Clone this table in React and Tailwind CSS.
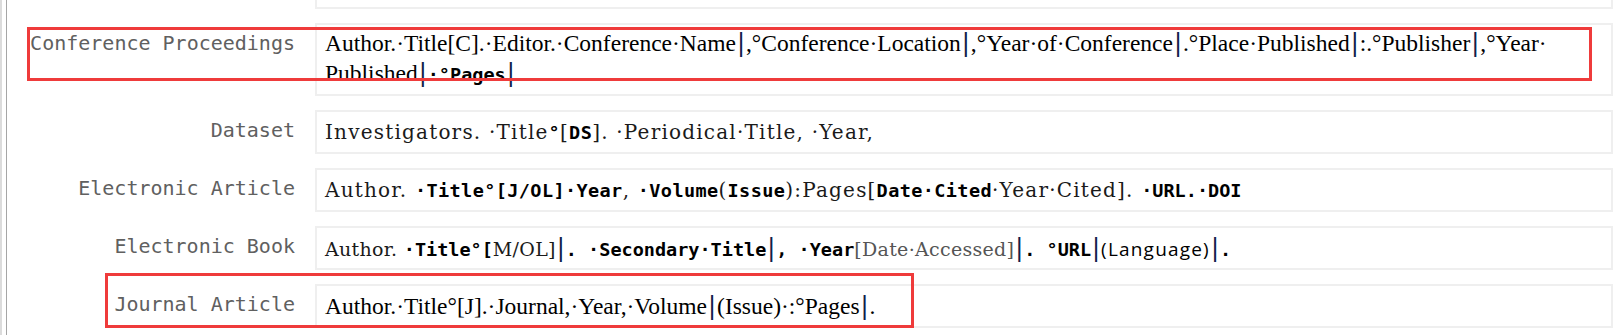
import React from "react";

const cls = {
  s: "font-['DejaVu_Serif'] text-[19px] tracking-[0.3px] text-[#1a1a1a]",
  w: "font-['DejaVu_Serif'] text-[20px] tracking-[1.2px] text-[#1a1a1a]",
  g: "font-['DejaVu_Serif'] text-[19px] tracking-[0.3px] text-[#555555]",
  t: "font-['Liberation_Serif'] text-[23.5px] text-black",
  b: "font-['DejaVu_Sans_Mono'] font-bold text-[18.5px] text-black",
  x: "font-['DejaVu_Sans_Mono'] font-bold text-[18.5px] tracking-[0.4px] text-black",
  m: "font-['DejaVu_Sans_Mono'] font-semibold text-[18.5px] text-black",
  o: "font-['Open_Sans'] text-[19px] tracking-[1.2px] text-black",
  p: "inline-block w-[10px] text-center font-['DejaVu_Sans'] text-[24px] text-[#10204a]",
};

const rows = [
  {
    label: "Dataset",
    parts: [
      ["w", "Investigators. ·Title"],
      ["x", "°"],
      ["w", "["],
      ["x", "DS"],
      ["w", "]. ·Periodical·Title, ·Year,"],
    ],
  },
  {
    label: "Electronic Article",
    parts: [
      ["w", "Author. "],
      ["x", "·Title°[J/OL]·Year"],
      ["w", ", "],
      ["x", "·Volume"],
      ["w", "("],
      ["x", "Issue"],
      ["w", "):Pages["],
      ["x", "Date·Cited"],
      ["w", "·Year·Cited]. "],
      ["m", "·URL.·DOI"],
    ],
  },
  {
    label: "Electronic Book",
    parts: [
      ["s", "Author. "],
      ["b", "·Title°["],
      ["s", "M/OL]"],
      ["p", "|"],
      ["b", ". ·Secondary·Title"],
      ["p", "|"],
      ["b", ", ·Year"],
      ["g", "[Date·Accessed]"],
      ["p", "|"],
      ["b", ". °URL"],
      ["p", "|"],
      ["o", "(Language)"],
      ["p", "|"],
      ["b", "."],
    ],
  },
  {
    label: "Journal Article",
    parts: [
      ["t", "Author.·Title°[J].·Journal,·Year,·Volume"],
      ["p", "|"],
      ["t", "(Issue)·:°Pages"],
      ["p", "|"],
      ["t", "."],
    ],
  },
];

function Parts({ parts }) {
  return parts.map(([k, text], i) => (
    <span key={i} className={cls[k]}>
      {text}
    </span>
  ));
}

function Label({ children, className = "" }) {
  return (
    <div
      className={
        "text-right font-['DejaVu_Sans_Mono'] text-[20px] text-[#606060] whitespace-nowrap " +
        className
      }
    >
      {children}
    </div>
  );
}

export default function App() {
  return (
    <div className="relative flex h-[335px] w-[1620px] overflow-hidden bg-white">
      <div className="w-[2px] bg-[#dcdcdc]" />
      <div className="w-[4px]" />
      <div className="w-[1px] bg-[#a6a6a6]" />

      <div className="flex flex-col">
        <div className="flex gap-x-[20px]">
          <div className="w-[288px]" />
          <div className="h-[9px] w-[1298px] border-x-2 border-b-2 border-[#efefef]" />
        </div>

        <div className="mt-[14px] flex items-start gap-x-[20px]">
          <Label className="w-[288px] pt-[6px] leading-[28px]">
            Conference Proceedings
          </Label>
          <div className="w-[1298px] border-2 border-[#efefef] pl-[8px] pt-[4px] pb-[5px] leading-[28px]">
            <div className="whitespace-nowrap">
              <Parts
                parts={[
                  ["t", "Author.·Title[C].·Editor.·Conference·Name"],
                  ["p", "|"],
                  ["t", ",°Conference·Location"],
                  ["p", "|"],
                  ["t", ",°Year·of·Conference"],
                  ["p", "|"],
                  ["t", ".°Place·Published"],
                  ["p", "|"],
                  ["t", ":.°Publisher"],
                  ["p", "|"],
                  ["t", ",°Year·"],
                ]}
              />
            </div>
            <div className="whitespace-nowrap">
              <Parts
                parts={[
                  ["t", "Published"],
                  ["p", "|"],
                  ["m", "·°Pages"],
                  ["p", "|"],
                ]}
              />
            </div>
          </div>
        </div>

        {rows.map((r) => (
          <div key={r.label} className="mt-[14px] flex items-center gap-x-[20px]">
            <Label className="w-[288px] -mt-[4px]">{r.label}</Label>
            <div className="flex h-[44px] w-[1298px] items-center whitespace-nowrap border-2 border-[#efefef] pl-[8px]">
              <div>
                <Parts parts={r.parts} />
              </div>
            </div>
          </div>
        ))}
      </div>

      <div className="pointer-events-none absolute left-[27px] top-[27px] h-[54px] w-[1565px] border-[3px] border-[#ef3b3b]" />
      <div className="pointer-events-none absolute left-[105px] top-[273px] h-[55px] w-[809px] border-[3px] border-[#ef3b3b]" />
    </div>
  );
}
